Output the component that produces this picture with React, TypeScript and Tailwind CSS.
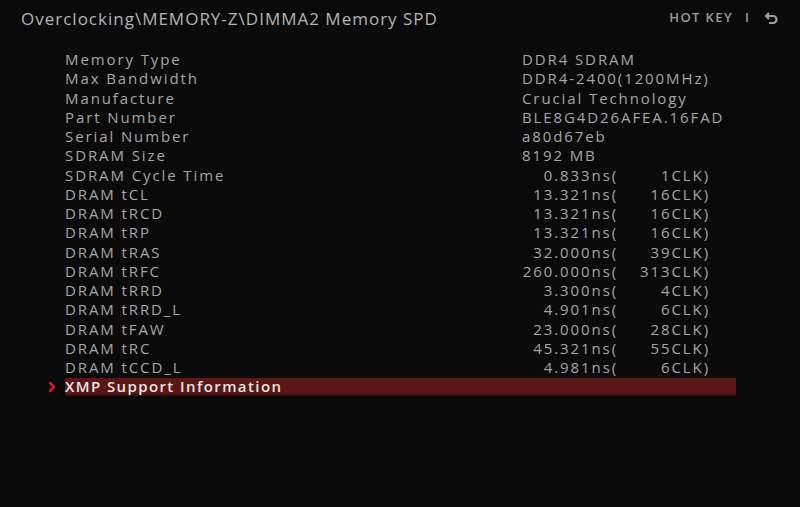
import { ChevronRight } from "lucide-react"

type Row = { label: string; value?: string; ns?: string; clk?: string }

const rows: Row[] = [
  { label: "Memory Type", value: "DDR4 SDRAM" },
  { label: "Max Bandwidth", value: "DDR4-2400(1200MHz)" },
  { label: "Manufacture", value: "Crucial Technology" },
  { label: "Part Number", value: "BLE8G4D26AFEA.16FAD" },
  { label: "Serial Number", value: "a80d67eb" },
  { label: "SDRAM Size", value: "8192 MB" },
  { label: "SDRAM Cycle Time", ns: "0.833ns(", clk: "1CLK)" },
  { label: "DRAM tCL", ns: "13.321ns(", clk: "16CLK)" },
  { label: "DRAM tRCD", ns: "13.321ns(", clk: "16CLK)" },
  { label: "DRAM tRP", ns: "13.321ns(", clk: "16CLK)" },
  { label: "DRAM tRAS", ns: "32.000ns(", clk: "39CLK)" },
  { label: "DRAM tRFC", ns: "260.000ns(", clk: "313CLK)" },
  { label: "DRAM tRRD", ns: "3.300ns(", clk: "4CLK)" },
  { label: "DRAM tRRD_L", ns: "4.901ns(", clk: "6CLK)" },
  { label: "DRAM tFAW", ns: "23.000ns(", clk: "28CLK)" },
  { label: "DRAM tRC", ns: "45.321ns(", clk: "55CLK)" },
  { label: "DRAM tCCD_L", ns: "4.981ns(", clk: "6CLK)" },
]

function ReturnIcon() {
  return (
    <svg width="14" height="12" viewBox="0 0 14 12" fill="none" stroke="#a0a0a0" strokeWidth="2.2">
      <path d="M2 4h7a3.5 3.5 0 0 1 0 7H5" />
      <path d="M5 1 2 4l3 3" />
    </svg>
  )
}

export default function App() {
  return (
    <div
      className="w-[800px] h-[507px] bg-[#0a0a0a] text-[#a6a6a6] overflow-hidden"
      style={{ fontFamily: '"Open Sans", "Noto Sans", sans-serif' }}
    >
      <div className="flex items-center justify-between h-[38px] pl-[21px] pr-[22px]">
        <h1 className="text-[17px] tracking-[1px] text-[#b4b4b4]">
          Overclocking\MEMORY-Z\DIMMA2 Memory SPD
        </h1>
        <div className="flex items-center text-[13px] font-semibold text-[#9a9a9a] -mt-[3px]">
          <span className="tracking-[1.4px]">HOT KEY</span>
          <span className="ml-[12px]">I</span>
          <span className="ml-[15px]">
            <ReturnIcon />
          </span>
        </div>
      </div>

      <div className="mt-[12px] flex flex-col">
        {rows.map((r) => (
          <div key={r.label} className="flex items-center h-[19.25px] pl-[65px] text-[15px] tracking-[1.9px] leading-none">
            <span className="w-[457px]">{r.label}</span>
            {r.value ? (
              <span>{r.value}</span>
            ) : (
              <span className="flex">
                <span className="w-[96px] text-right">{r.ns}</span>
                <span className="w-[92px] text-right">{r.clk}</span>
              </span>
            )}
          </div>
        ))}
        <div className="relative flex items-center mt-[1px]">
          <ChevronRight className="absolute left-[44px] top-[1px] w-[16px] h-[16px] text-[#d01818]" strokeWidth={4} />
          <div className="ml-[65px] w-[671px] h-[18px] bg-[#5c1616] border-b-2 border-[#3a1010] flex items-center">
            <span className="text-[15px] font-semibold tracking-[1.4px] text-[#e6e6e6] leading-none">XMP Support Information</span>
          </div>
        </div>
      </div>
    </div>
  )
}
